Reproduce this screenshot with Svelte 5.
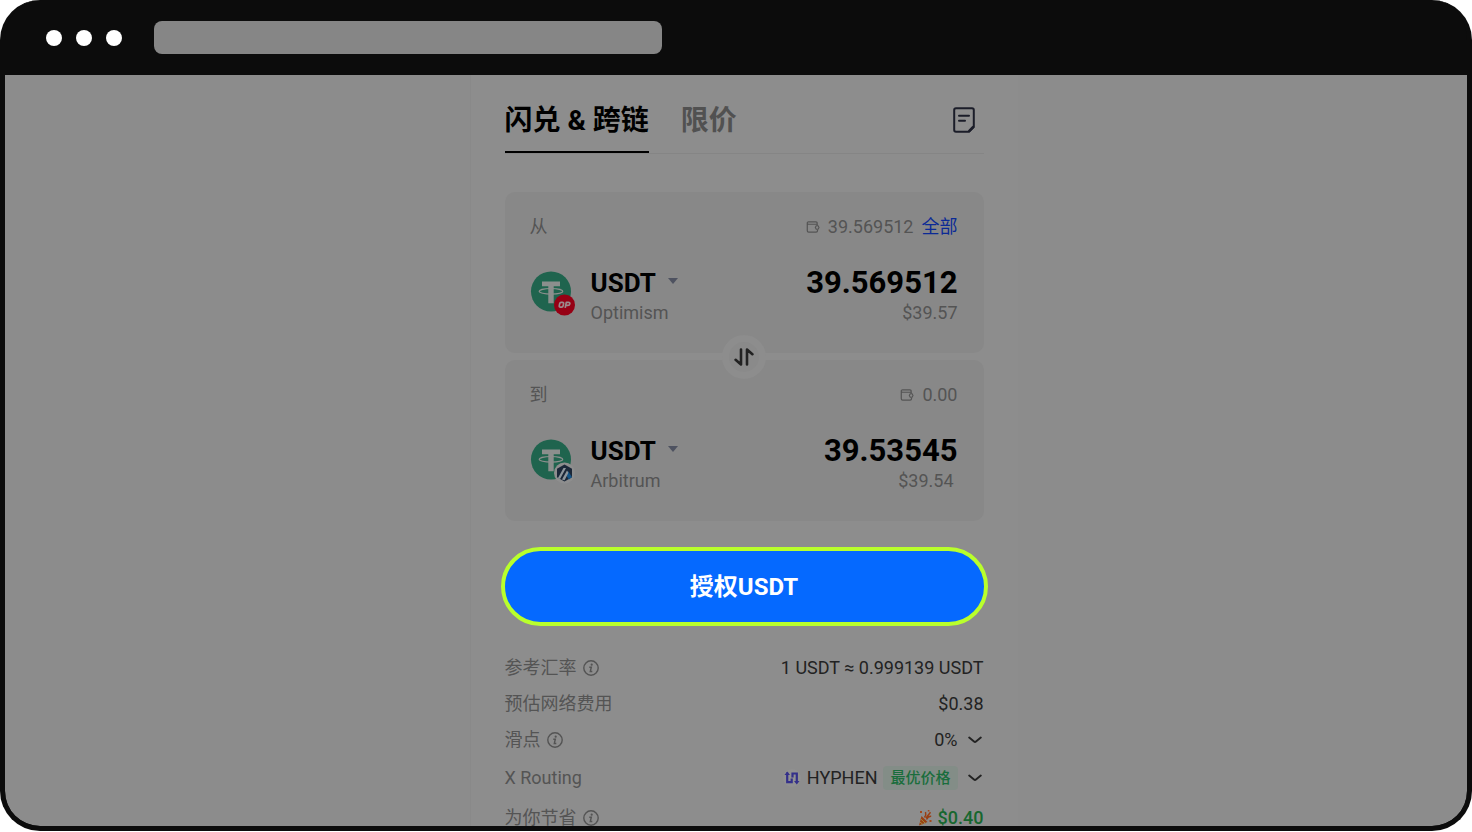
<script>
  let address = '';

  const sides = [
    {
      label: '从',
      balance: '39.569512',
      max: true,
      symbol: 'USDT',
      chain: 'Optimism',
      amount: '39.569512',
      fiat: '$39.57'
    },
    {
      label: '到',
      balance: '0.00',
      max: false,
      symbol: 'USDT',
      chain: 'Arbitrum',
      amount: '39.53545',
      fiat: '$39.54'
    }
  ];
</script>

{#snippet info()}
  <svg class="info" viewBox="0 0 16 16" aria-hidden="true">
    <circle cx="8" cy="8" r="7.2" fill="none" stroke="currentColor" stroke-width="1.4" />
    <circle cx="8.7" cy="4.7" r="1.1" fill="currentColor" />
    <path d="M6.3 7.2h2l-1 4.3h2" fill="none" stroke="currentColor" stroke-width="1.4" />
  </svg>
{/snippet}

{#snippet chevron()}
  <svg class="chevron" viewBox="0 0 14 8" aria-hidden="true">
    <path d="M1.2 1.6L6 5.5q1 .8 2 0l4.8-3.9" fill="none" stroke="currentColor" stroke-width="1.9" stroke-linecap="round" />
  </svg>
{/snippet}

<div class="window">
  <header class="bar">
    <span class="dot"></span>
    <span class="dot"></span>
    <span class="dot"></span>
    <input class="address" type="text" aria-label="URL" bind:value={address} />
  </header>

  <main class="screen">
    <div class="panel">
      <nav class="tabs">
        <a class="tab active" href="#swap">闪兑 &amp; 跨链</a>
        <a class="tab" href="#limit">限价</a>
        <button class="orders" aria-label="订单">
          <svg viewBox="0 0 22 26" aria-hidden="true">
            <path d="M3 1.2h16q1.8 0 1.8 1.8v17l-4.8 4.8H3q-1.8 0-1.8-1.8V3q0-1.8 1.8-1.8z" fill="none" stroke="currentColor" stroke-width="2" stroke-linejoin="round" />
            <path d="M20.4 19.6l-4.6 4.8" stroke="currentColor" stroke-width="2.4" />
            <path d="M6 8.7h10M6 13.7h6" stroke="currentColor" stroke-width="2" stroke-linecap="round" />
          </svg>
        </button>
      </nav>

      <div class="cards">
        {#each sides as side}
          <section class="card">
            <div class="card-top">
              <span>{side.label}</span>
              <span class="balance">
                <svg class="wallet" viewBox="0 0 14 13" aria-hidden="true">
                  <path d="M11.5 3.5V2.2q0-1.3-1.3-1.3H2.2Q.8.9.8 2.2v8.4q0 1.5 1.5 1.5h8q1.6 0 1.6-1.5V9.5M.8 2.5q0 1 1.4 1h8.6q1.1 0 1.1 1.5" fill="none" stroke="currentColor" stroke-width="1.3" />
                  <path d="M10.5 5.2h2l1 1.9-1 1.9h-2l-1-1.9z" fill="none" stroke="currentColor" stroke-width="1.2" />
                </svg>
                {side.balance}
                {#if side.max}
                  <button class="max">全部</button>
                {/if}
              </span>
            </div>
            <div class="card-main">
              <svg class="coin" viewBox="0 0 45 45" aria-hidden="true">
                <circle cx="21" cy="20.5" r="20" fill="#1f644e" />
                <path d="M12 10.5h18v4.8h-6.3v17h-5.4v-17H12z" fill="#8b8f8d" />
                <ellipse cx="21" cy="20.3" rx="11.8" ry="2.8" fill="none" stroke="#8b8f8d" stroke-width="1.2" />
                {#if side.chain === 'Optimism'}
                  <circle cx="34.5" cy="34" r="10.5" fill="#960014" />
                  <g fill="none" stroke="#9c8a8c" stroke-width="1.7" stroke-linejoin="round">
                    <path d="M31 31.4h1.6q1.2 0 1 1.2l-.4 2q-.3 1.5-1.6 1.5h-1.2q-1.4 0-1.1-1.5l.4-2q.3-1.2 1.3-1.2z" />
                    <path d="M35.2 36.9l1.1-5.5h2.2q1.6 0 1.3 1.4-.3 1.6-1.9 1.6h-2" />
                  </g>
                {:else}
                  <circle cx="34.5" cy="34" r="10.5" fill="#8e8e8e" />
                  <path d="M34.5 25.5l7.5 4.3v8.5l-7.5 4.3-7.5-4.3v-8.5z" fill="#1b2738" />
                  <path d="M38 32l4 6-3 2.5-3.5-5z" fill="#155486" />
                  <path d="M28 39l5.5-10h2.5l-6 11zM32 40.5l5-9 1.4 2.3-3.8 7.4z" fill="#8e969c" />
                {/if}
              </svg>
              <div class="token">
                <button class="symbol">
                  {side.symbol}
                  <svg class="caret" viewBox="0 0 10 6" aria-hidden="true"><path d="M0 0h10L5 6z" fill="#4e5260" /></svg>
                </button>
                <span class="sub">{side.chain}</span>
              </div>
              <div class="value">
                <span class="amount">{side.amount}</span>
                <span class="sub" class:estimate={!side.max}>{side.fiat}</span>
              </div>
            </div>
          </section>
        {/each}
        <button class="swap" aria-label="切换">
          <svg viewBox="0 0 20 18" aria-hidden="true">
            <path d="M7 1.5v15L1.6 11.8M13 16.5v-15L18.4 6.2" fill="none" stroke="currentColor" stroke-width="2.6" stroke-linecap="round" stroke-linejoin="round" />
          </svg>
        </button>
      </div>

      <button class="approve">授权USDT</button>

      <dl class="details">
        <div class="row">
          <dt>参考汇率 {@render info()}</dt>
          <dd>1 USDT ≈ 0.999139 USDT</dd>
        </div>
        <div class="row">
          <dt>预估网络费用</dt>
          <dd>$0.38</dd>
        </div>
        <div class="row">
          <dt>滑点 {@render info()}</dt>
          <dd>0% {@render chevron()}</dd>
        </div>
        <div class="row tall">
          <dt>X Routing</dt>
          <dd>
            <svg class="hyphen" viewBox="0 0 18 18" aria-hidden="true">
              <circle cx="9" cy="9" r="9" fill="#919191" />
              <path d="M4.2 3.5v9.7h4.5V9.5M9.5 8.5V4.5h4.3v9" fill="none" stroke="#34308a" stroke-width="2.2" />
              <path d="M1.5 6l2.7-3.5L7 6zM11 12h5.5l-2.7 3.5z" fill="#34308a" />
            </svg>
            HYPHEN
            <span class="best">最优价格</span>
            {@render chevron()}
          </dd>
        </div>
        <div class="row tall">
          <dt>为你节省 {@render info()}</dt>
          <dd class="saved">
            <svg class="party" viewBox="0 0 14 16" aria-hidden="true">
              <path d="M1 15.5L3.5 6l6 6z" fill="#9a3f12" />
              <path d="M2.8 9l4.8 4.5M2 12l3 2.5" stroke="#a18a3c" />
              <path d="M6.5 7.5Q8.5 5 7.5 2M8.5 9.5Q10 6 13.2 6.2M8 8L12.5 2.2" fill="none" stroke="#9a3f12" stroke-width="1.5" />
              <path d="M2 1h2v2H2zM11.5 10h2v2h-2zM9.8 0h1.6v1.6H9.8z" fill="#a3491c" />
            </svg>
            $0.40
          </dd>
        </div>
      </dl>
    </div>
  </main>
</div>

<style>
  :global(body) {
    background: #fff;
  }

  .window {
    box-sizing: border-box;
    display: flex;
    flex-direction: column;
    height: calc(100vh - 1px);
    border: 5px solid #0c0c0c;
    border-top: 0;
    border-radius: 40px;
    background: #0c0c0c;
    overflow: hidden;
    font-family: Roboto, "Noto Sans CJK SC", sans-serif;
    font-size: 18px;
    line-height: 24px;
    color: #222;
  }

  button {
    padding: 0;
    border: none;
    background: none;
    font: inherit;
    color: inherit;
    cursor: pointer;
  }

  svg {
    display: block;
    flex: none;
  }

  .bar {
    flex: none;
    display: flex;
    align-items: center;
    gap: 14px;
    height: 75px;
    padding: 0 41px;
  }

  .dot {
    width: 16px;
    height: 16px;
    border-radius: 50%;
    background: #fff;
  }

  .address {
    box-sizing: border-box;
    width: 508px;
    height: 33px;
    margin-left: 18px;
    padding: 0 12px;
    border: none;
    border-radius: 8px;
    background: #868686;
  }

  .screen {
    flex: 1;
    min-height: 0;
    display: flex;
    justify-content: center;
    padding-left: 15px;
    border-radius: 0 0 35px 35px;
    background: #8c8c8c;
    overflow: hidden;
  }

  .panel {
    width: 479px;
    padding: 0 34px;
    border-left: 1px solid #898989;
    background: #8d8d8d;
  }

  .tabs {
    display: flex;
    align-items: stretch;
    gap: 32px;
    height: 78px;
    border-bottom: 1px solid #858585;
  }

  .tab {
    box-sizing: border-box;
    padding-top: 26px;
    font-size: 28px;
    font-weight: 700;
    line-height: 40px;
    color: #515151;
    text-decoration: none;
  }

  .tab.active {
    border-bottom: 2px solid #000;
    color: #000;
  }

  .orders {
    align-self: center;
    margin-left: auto;
    margin-top: 12px;
    margin-right: 9px;
    color: #1b1d29;
  }

  .orders svg {
    width: 22px;
    height: 26px;
  }

  .cards {
    position: relative;
    display: flex;
    flex-direction: column;
    gap: 7px;
    margin-top: 38px;
  }

  .card {
    padding: 23px 26px 27px 25px;
    border-radius: 10px;
    background: #888;
  }

  .card-top {
    display: flex;
    justify-content: space-between;
    color: #545454;
  }

  .balance {
    display: flex;
    align-items: center;
    gap: 8px;
  }

  .wallet {
    width: 14px;
    height: 12px;
  }

  .max {
    color: #0b2a96;
  }

  .card-main {
    display: flex;
    margin-top: 27px;
  }

  .coin {
    width: 45px;
    height: 45px;
    margin-top: 5px;
    margin-right: 16px;
  }

  .token,
  .value {
    display: flex;
    flex-direction: column;
    align-items: flex-start;
  }

  .value {
    margin-left: auto;
    align-items: flex-end;
  }

  .symbol {
    display: flex;
    align-items: center;
    gap: 12px;
    font-size: 26px;
    font-weight: 700;
    line-height: 34px;
    color: #000;
  }

  .caret {
    width: 10px;
    height: 6px;
    margin-bottom: 4px;
  }

  .sub {
    color: #545454;
    line-height: 26px;
  }

  .estimate {
    padding-right: 4px;
  }

  .amount {
    font-size: 31px;
    font-weight: 700;
    line-height: 34px;
    color: #000;
  }

  .swap {
    position: absolute;
    top: 50%;
    left: 50%;
    display: grid;
    place-items: center;
    box-sizing: border-box;
    width: 44px;
    height: 44px;
    border: 7px solid #8d8d8d;
    border-radius: 50%;
    background: #8a8a8a;
    color: #222;
    transform: translate(-50%, -50%);
  }

  .swap svg {
    width: 20px;
    height: 18px;
  }

  .approve {
    box-sizing: border-box;
    width: calc(100% + 8px);
    height: 79px;
    margin: 26px -4px 24px;
    border: 4px solid #b9ff2c;
    border-radius: 40px;
    background: #0569ff;
    color: #fff;
    font-size: 24px;
    font-weight: 700;
  }

  .details {
    margin: 0;
  }

  .row {
    display: flex;
    align-items: center;
    justify-content: space-between;
    height: 36px;
  }

  .tall {
    height: 40px;
  }

  dt,
  dd {
    display: flex;
    align-items: center;
    gap: 6px;
    margin: 0;
  }

  dt {
    color: #545454;
  }

  .info {
    width: 16px;
    height: 16px;
  }

  .chevron {
    width: 14px;
    height: 8px;
    margin: 0 2px 0 4px;
  }

  .hyphen {
    width: 18px;
    height: 18px;
  }

  .best {
    padding: 0 7px;
    border-radius: 4px;
    background: #838d87;
    color: #1a6d3c;
    font-size: 15px;
    font-weight: 500;
  }

  .saved {
    font-weight: 500;
    color: #17672f;
  }

  .party {
    width: 14px;
    height: 16px;
  }
</style>
